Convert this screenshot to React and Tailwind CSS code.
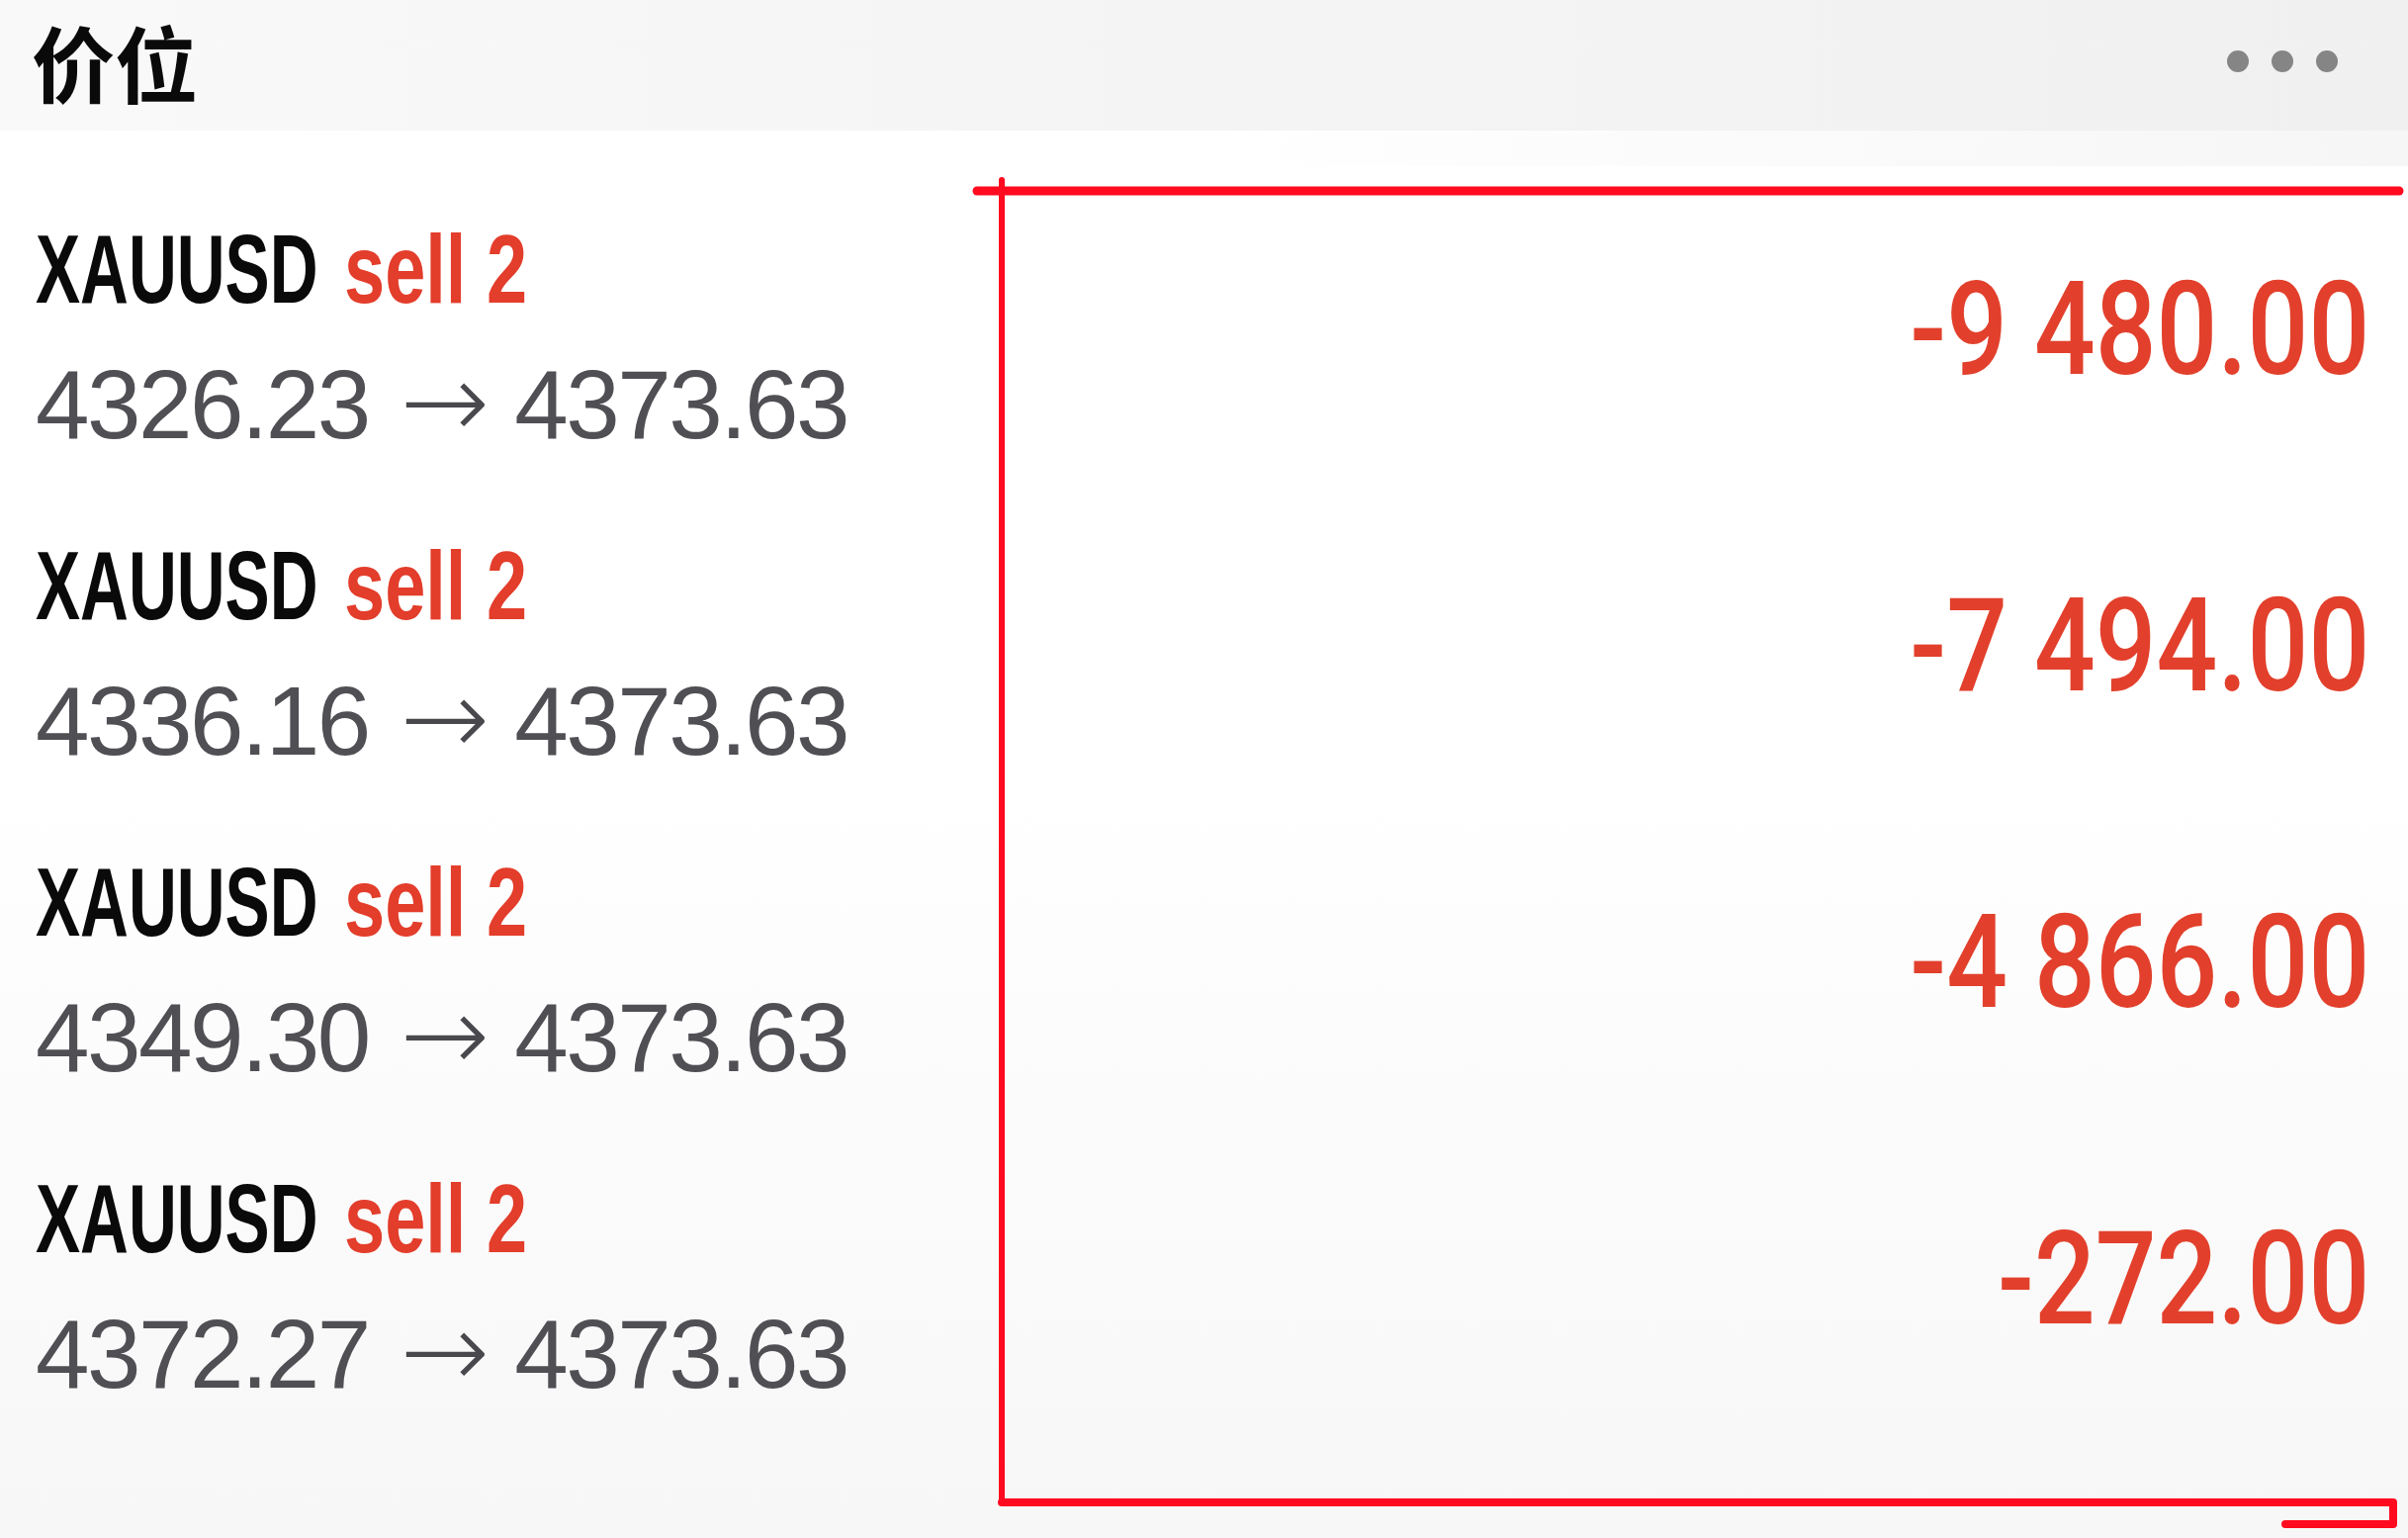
import React from 'react';

const rows = [
  { from: '4326.23', to: '4373.63', pnl: '-9 480.00' },
  { from: '4336.16', to: '4373.63', pnl: '-7 494.00' },
  { from: '4349.30', to: '4373.63', pnl: '-4 866.00' },
  { from: '4372.27', to: '4373.63', pnl: '-272.00' },
];

function PositionRow({ row }) {
  return (
    <div className="flex items-center justify-between">
      <div className="flex flex-col">
        {/* symbol + side */}
        <div className="flex h-[110px] items-center font-['Liberation_Sans',sans-serif] text-[98px] font-bold leading-[110px] whitespace-nowrap">
          <span className="w-[287px]">
            <span className="inline-block origin-left scale-x-[0.69] text-[#0a0a0a]">XAUUSD</span>
          </span>
          <span className="ml-[25px]">
            <span className="inline-block origin-left scale-x-[0.755] text-[#e33d2b]">sell 2</span>
          </span>
        </div>
        <div className="mt-[24px] flex h-[110px] items-baseline font-['Liberation_Sans',sans-serif] text-[98px] leading-[110px] tracking-[-2.5px] text-[#4f4f54] whitespace-nowrap">
          <span>{row.from}</span>
          <span className="ml-[32px] mr-[25px] font-['DejaVu_Sans',sans-serif] text-[108px] font-light tracking-normal text-[#48484d]">→</span>
          <span>{row.to}</span>
        </div>
      </div>
      <div className="mb-[13px] flex justify-end">
        <span className="inline-block origin-right scale-x-[0.83] font-['Roboto',sans-serif] text-[131px] font-medium leading-[130px] text-[#e2402c] whitespace-nowrap">
          {row.pnl}
        </span>
      </div>
    </div>
  );
}

export default function App() {
  return (
    <div className="relative h-[1555px] w-[2435px] overflow-hidden bg-linear-to-b from-white via-white to-[#f7f7f7]">
      {/* top bar */}
      <div className="flex h-[132px] items-center justify-between bg-linear-to-r from-[#f9f9f9] to-[#f0f0f0] pb-[8px] pl-[32px] pr-[71px]">
        <h1 className="font-['Noto_Sans_CJK_SC',sans-serif] text-[84px] font-bold leading-none text-[#0a0a0a]">价位</h1>
        <div className="flex items-center gap-[23px]">
          <span className="h-[22px] w-[22px] rounded-full bg-[#858585]" />
          <span className="h-[22px] w-[22px] rounded-full bg-[#858585]" />
          <span className="h-[22px] w-[22px] rounded-full bg-[#858585]" />
        </div>
      </div>
      <div className="h-[36px] bg-linear-to-r from-white via-white to-[#f6f6f6]" />

      {/* positions */}
      <div className="flex flex-col gap-[76px] pl-[36px] pr-[39px] pt-[49px]">
        {rows.map((r, i) => (
          <PositionRow key={i} row={r} />
        ))}
      </div>

      {/* hand-drawn annotation */}
      <svg className="pointer-events-none absolute inset-0" width="2435" height="1555" viewBox="0 0 2435 1555">
        <g stroke="#ff0a1e" fill="none" strokeLinecap="round" strokeLinejoin="round">
          <path d="M988 193 L2426 193" strokeWidth="9" />
          <path d="M1013 182 L1013 1519" strokeWidth="6" />
          <path d="M1013 1519 L2420 1519 L2420 1541 L2311 1541" strokeWidth="8" />
        </g>
      </svg>
    </div>
  );
}
